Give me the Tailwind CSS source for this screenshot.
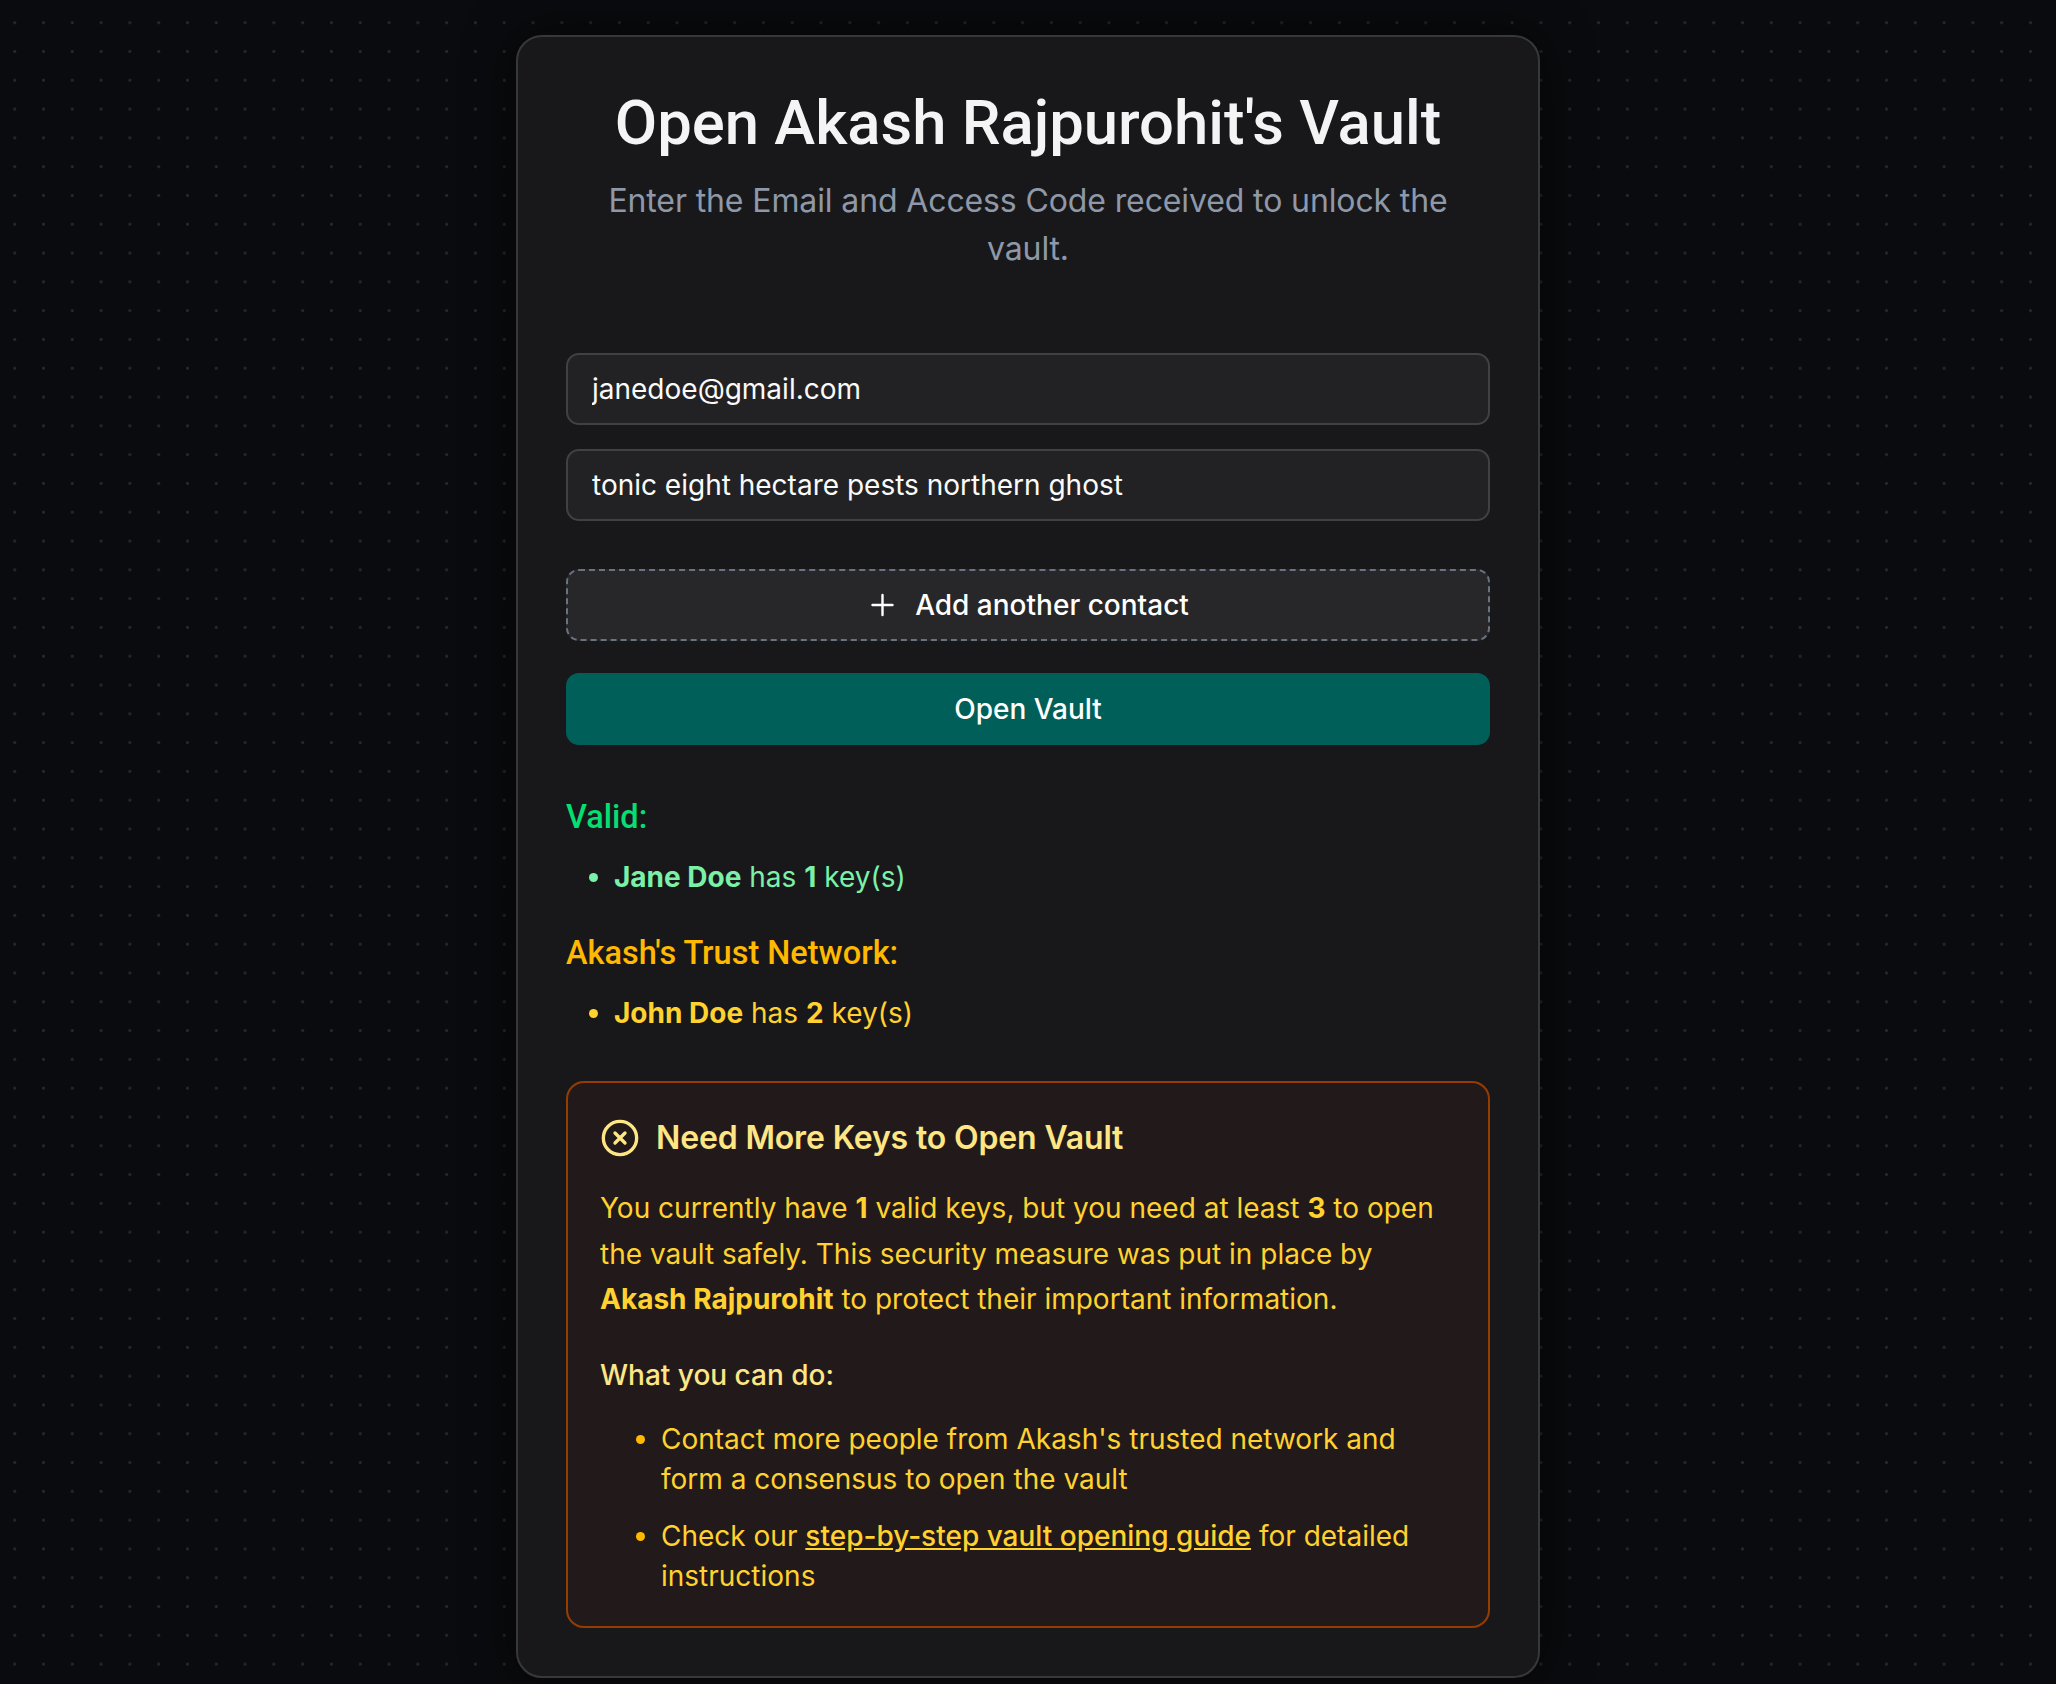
<!DOCTYPE html>
<html lang="en">
<head>
  <meta charset="UTF-8" />
  <title>Open Vault</title>
  <script src="https://cdn.jsdelivr.net/npm/@tailwindcss/browser@4"></script>
</head>
<body class="bg-[#0a0b0e] font-[family-name:Inter,sans-serif]">
  <div class="min-h-[1684px] flex justify-center items-start pt-[35px] bg-[radial-gradient(circle,#28282a_1.3px,transparent_1.6px)] bg-size-[28.8px_28.8px] bg-position-[0.3px_8.3px]">
    <div class="w-[1024px] bg-[#18181b] border-2 border-[#38383c] rounded-[26px] px-[48px] pt-[50px] pb-[48px] shadow-[0_0_50px_rgba(0,0,0,0.6)]">
      <div class="text-center px-[16px]">
        <h1 class="font-[family-name:Roboto,sans-serif] text-[61.6px] leading-[72px] font-medium text-[#f4f4f5]">Open Akash Rajpurohit's Vault</h1>
        <p class="mt-[18px] text-[32px] leading-[48px] tracking-[-0.12px] text-[#8f98a8]">Enter the Email and Access Code received to unlock the vault.</p>
      </div>

      <div class="mt-[80px] flex flex-col gap-[24px]">
        <input value="janedoe@gmail.com" class="w-full h-[72px] px-[24px] bg-[#222224] border-2 border-[#414145] rounded-[13px] text-[28px] text-[#fafafa]" />
        <input value="tonic eight hectare pests northern ghost" class="w-full h-[72px] px-[24px] bg-[#222224] border-2 border-[#414145] rounded-[13px] text-[28px] text-[#fafafa]" />
      </div>

      <button class="mt-[48px] w-full h-[72px] flex items-center justify-center gap-[20px] bg-[#27272a] border-2 border-dashed border-[#6b7280] rounded-[13px] text-[28px] font-medium text-white">
        <svg width="28" height="28" viewBox="0 0 28 28" fill="none" stroke="currentColor" stroke-width="2.4" stroke-linecap="round"><path d="M15.5 4v20M5.5 14h20"/></svg>
        Add another contact
      </button>
      <button class="mt-[32px] w-full h-[72px] bg-[#005f59] rounded-[13px] text-[28px] font-medium text-white">Open Vault</button>

      <h3 class="mt-[52px] font-[family-name:Roboto,sans-serif] text-[32.5px] leading-[40px] font-medium text-[#05df72]">Valid:</h3>
      <ul class="mt-[20px] pl-[48px] list-disc text-[28px] leading-[40px] text-[#7bf1a8]">
        <li><b class="font-bold">Jane Doe</b> has <b class="font-bold">1</b> key(s)</li>
      </ul>
      <h3 class="mt-[36px] font-[family-name:Roboto,sans-serif] text-[32.5px] leading-[40px] font-medium text-[#ffb900]">Akash's Trust Network:</h3>
      <ul class="mt-[20px] pl-[48px] list-disc text-[28px] leading-[40px] text-[#ffd230]">
        <li><b class="font-bold">John Doe</b> has <b class="font-bold">2</b> key(s)</li>
      </ul>

      <div class="mt-[48px] border-2 border-[#973c00] rounded-[18px] bg-[#221a1a] px-[32px] pt-[31px] pb-[30px] text-[#ffd230]">
        <div class="flex items-center gap-[16px]">
          <svg width="40" height="40" viewBox="0 0 24 24" fill="none" stroke="#fee685" stroke-width="2" stroke-linecap="round"><circle cx="12" cy="12" r="10"/><path d="M15 9l-6 6M9 9l6 6"/></svg>
          <h3 class="text-[32px] leading-[48px] font-semibold tracking-[-0.15px] text-[#fee685]">Need More Keys to Open Vault</h3>
        </div>
        <p class="mt-[24px] text-[28px] leading-[45.5px]">You currently have <b class="font-bold">1</b> valid keys, but you need at least <b class="font-bold">3</b> to open the vault safely. This security measure was put in place by <b class="font-bold">Akash Rajpurohit</b> to protect their important information.</p>
        <p class="mt-[32px] text-[28px] leading-[40px] font-medium text-[#fee685]">What you can do:</p>
        <ul class="mt-[24px] pl-[61px] list-disc text-[28px] leading-[40px] marker:text-[#ffb900]">
          <li>Contact more people from Akash's trusted network and form a consensus to open the vault</li>
          <li class="mt-[17px]">Check our <a href="#" class="underline font-medium">step-by-step vault opening guide</a> for detailed instructions</li>
        </ul>
      </div>
    </div>
  </div>
</body>
</html>
